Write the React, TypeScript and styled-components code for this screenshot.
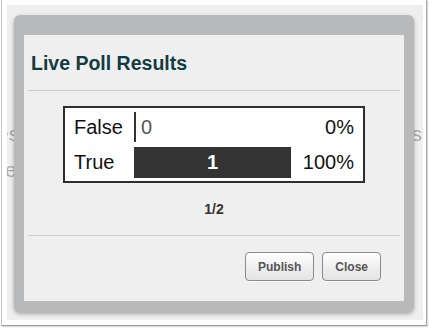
import React from 'react';
import styled, { createGlobalStyle } from 'styled-components';

const GlobalStyle = createGlobalStyle`
  html, body {
    margin: 0;
    padding: 0;
    background: #ffffff;
  }
  body {
    font-family: 'Liberation Sans', Arial, sans-serif;
  }
`;

const results = [
  { label: 'False', count: 0, percent: 0 },
  { label: 'True', count: 1, percent: 100 },
];

const App = () => {
  return (
    <>
      <GlobalStyle />
      <Screen>
        <Frame>
          <Backdrop>
            <PageBehind>
              <FadedLine>
                <FadedText $shift={-10}>es</FadedText>
                <FadedText $shift={0}>s</FadedText>
              </FadedLine>
              <FadedLine>
                <FadedText $shift={-2}>e</FadedText>
              </FadedLine>
            </PageBehind>
            <Dialog>
              <Content>
                <Header>
                  <Title>Live Poll Results</Title>
                </Header>
                <Body>
                  <PollTable>
                    {results.map((r) => (
                      <PollRow key={r.label}>
                        <Label>{r.label}</Label>
                        <BarCell>
                          <Bar style={{ width: `${r.percent}%` }}>
                            {r.percent > 0 && <BarCount>{r.count}</BarCount>}
                          </Bar>
                          {r.percent === 0 && <OuterCount>{r.count}</OuterCount>}
                        </BarCell>
                        <Percent>{r.percent}%</Percent>
                      </PollRow>
                    ))}
                  </PollTable>
                  <Pager>1/2</Pager>
                </Body>
                <Footer>
                  <Button>Publish</Button>
                  <Button>Close</Button>
                </Footer>
              </Content>
            </Dialog>
          </Backdrop>
        </Frame>
      </Screen>
    </>
  );
};

export default App;

const Screen = styled.div`
  width: 430px;
  height: 328px;
  overflow: hidden;
  background: #ffffff;
`;

const Frame = styled.div`
  box-sizing: border-box;
  width: 426px;
  height: 326px;
  margin-left: 1px;
  padding: 5px 3px 4px 5px;
  border-left: 1px solid #c6c6c6;
  border-right: 1px solid #a9a9a9;
  border-bottom: 1px solid #9a9a9a;
  box-shadow: 1px 1px 1px rgba(0, 0, 0, 0.15);
  background: #ffffff;
`;

const Backdrop = styled.div`
  display: grid;
  grid-template: 1fr / 1fr;
  height: 315px;
  overflow: hidden;
  background: #efefef;

  & > * {
    grid-area: 1 / 1;
  }
`;

const PageBehind = styled.div`
  display: flex;
  flex-direction: column;
  gap: 12px;
  padding-top: 117px;
`;

const FadedLine = styled.div`
  display: flex;
  justify-content: space-between;
  padding-right: 1px;
`;

const FadedText = styled.span<{ $shift: number }>`
  margin-left: ${(p) => p.$shift}px;
  font-size: 21px;
  line-height: 24px;
  color: #a9a9a9;
  filter: blur(0.6px);
`;

const Dialog = styled.div`
  margin: 10px 9px 8px 7px;
  padding: 20px 10px 11px;
  border-radius: 6px;
  background: #b8b9ba;
  box-shadow: 0 2px 4px rgba(0, 0, 0, 0.3);
  z-index: 1;
`;

const Content = styled.div`
  display: flex;
  flex-direction: column;
  height: 266px;
  background: #efefef;
`;

const Header = styled.div`
  margin: 0 4px;
  padding: 17px 3px 16px;
  border-bottom: 1px solid #cccccc;
`;

const Title = styled.h2`
  margin: 0;
  font-size: 19.5px;
  line-height: 22px;
  font-weight: bold;
  color: #123b43;
`;

const Body = styled.div`
  display: flex;
  flex-direction: column;
  align-items: center;
  margin: 0 4px;
  padding: 15px 0 18px;
  border-bottom: 1px solid #cccccc;
`;

const PollTable = styled.div`
  display: flex;
  flex-direction: column;
  gap: 5px;
  box-sizing: border-box;
  width: 302px;
  padding: 4px 9px 3px;
  border: 2px solid #2e2e2e;
  background: #ffffff;
`;

const PollRow = styled.div`
  display: grid;
  grid-template-columns: 60px 157px 1fr;
  align-items: center;
  height: 30px;

  &:last-child {
    height: 31px;
  }
`;

const Label = styled.span`
  font-size: 20px;
  color: #111111;
`;

const BarCell = styled.div`
  display: flex;
  align-items: center;
  height: 100%;
`;

const Bar = styled.div`
  display: flex;
  align-items: center;
  justify-content: center;
  box-sizing: border-box;
  min-width: 2px;
  height: 100%;
  background: #333333;
`;

const BarCount = styled.span`
  font-size: 20px;
  font-weight: bold;
  color: #ffffff;
`;

const OuterCount = styled.span`
  margin-left: 5px;
  font-size: 20px;
  color: #555555;
`;

const Percent = styled.span`
  text-align: right;
  font-size: 20px;
  color: #111111;
`;

const Pager = styled.div`
  margin-top: 18px;
  font-size: 14px;
  line-height: 16px;
  font-weight: bold;
  color: #333333;
`;

const Footer = styled.div`
  display: flex;
  justify-content: flex-end;
  gap: 8px;
  padding: 16px 23px 0 0;
`;

const Button = styled.button`
  box-sizing: border-box;
  height: 29px;
  padding: 0 12px;
  border: 1px solid #8a8a8a;
  border-radius: 4px;
  background: linear-gradient(#fefefe, #e3e3e3);
  box-shadow: 0 1px 0 rgba(255, 255, 255, 0.7);
  font-family: 'Liberation Sans', Arial, sans-serif;
  font-size: 12px;
  font-weight: bold;
  color: #555555;
  cursor: pointer;
`;
